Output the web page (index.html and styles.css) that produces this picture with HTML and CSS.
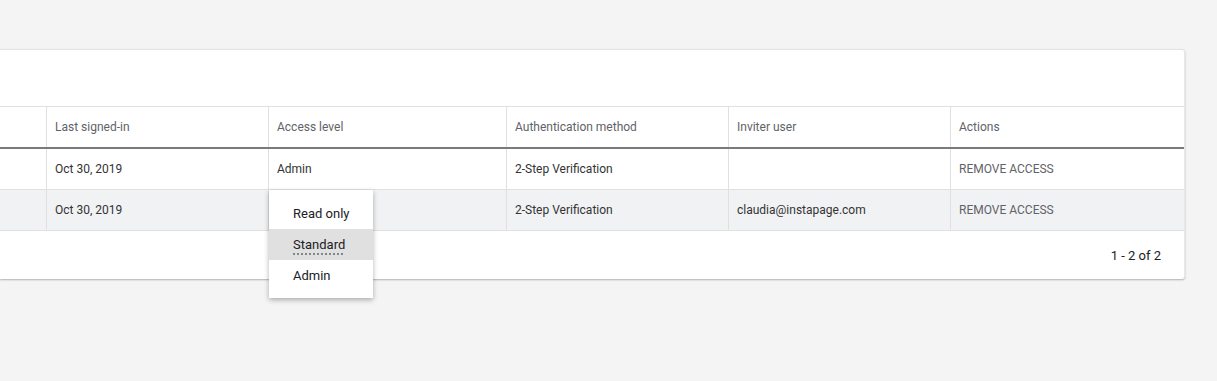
FILE: index.html
```html
<!DOCTYPE html>
<html lang="en">
<head>
  <meta charset="UTF-8" />
  <title>Users</title>
  <link rel="stylesheet" href="styles.css">
</head>
<body>
  <div class="page">
    <div class="card">
      <div class="card-head"></div>

      <!-- Table header -->
      <div class="row head-row">
        <div class="cell"></div>
        <div class="cell">Last signed-in</div>
        <div class="cell">Access level</div>
        <div class="cell">Authentication method</div>
        <div class="cell">Inviter user</div>
        <div class="cell">Actions</div>
      </div>

      <!-- Rows -->
      <div class="row">
        <div class="cell"></div>
        <div class="cell">Oct 30, 2019</div>
        <div class="cell">Admin</div>
        <div class="cell">2-Step Verification</div>
        <div class="cell"></div>
        <div class="cell action">REMOVE ACCESS</div>
      </div>
      <div class="row active">
        <div class="cell"></div>
        <div class="cell">Oct 30, 2019</div>
        <div class="cell menu-anchor">
          <ul class="menu">
            <li>Read only</li>
            <li class="selected"><span>Standard</span></li>
            <li>Admin</li>
          </ul>
        </div>
        <div class="cell">2-Step Verification</div>
        <div class="cell">claudia@instapage.com</div>
        <div class="cell action">REMOVE ACCESS</div>
      </div>

      <div class="card-foot">1 - 2 of 2</div>
    </div>
  </div>
</body>
</html>
```

FILE: styles.css
```css
/* Base */
html,
body {
  height: 100%;
}

body {
  margin: 0;
  font-family: Roboto, "Noto Sans", Arial, sans-serif;
  background-color: #f4f4f4;
  color: #202124;
}

.page {
  min-height: 100%;
  box-sizing: border-box;
  padding: 49px 32px 0 0;
}

.card {
  background-color: #ffffff;
  border-top: 1px solid #e3e3e3;
  border-right: 1px solid #e8e8e8;
  border-radius: 0 3px 3px 0;
  box-shadow: 0 1px 2px rgba(0, 0, 0, 0.28);
}

.card-head {
  height: 56px;
}

/* Table rows */
.row {
  display: grid;
  grid-template-columns: 46px 222px 238px 222px 222px 1fr;
  height: 40px;
  border-bottom: 1px solid #e0e0e0;
}

.head-row {
  border-top: 1px solid #e0e0e0;
  border-bottom: 2px solid #7a7a7a;
}

.cell {
  display: flex;
  align-items: center;
  padding-left: 8px;
  font-size: 12px;
  color: #333333;
  border-left: 1px solid #e0e0e0;
}

.cell:first-child {
  border-left: none;
}

.head-row .cell {
  color: #5f6368;
}

.row.active {
  background-color: #f1f2f4;
}

.cell.action {
  color: #5f6368;
}

/* Footer */
.card-foot {
  height: 48px;
  display: flex;
  align-items: center;
  justify-content: flex-end;
  padding-right: 23px;
  font-size: 13px;
  color: #202124;
}

/* Dropdown menu */
.menu-anchor {
  position: relative;
}

.menu {
  position: absolute;
  left: 0;
  top: 0;
  width: 104px;
  margin: 0;
  padding: 8px 0 7px;
  list-style: none;
  background-color: #ffffff;
  box-shadow: 0 2px 5px rgba(0, 0, 0, 0.3);
  z-index: 2;
}

.menu li {
  height: 31px;
  line-height: 31px;
  padding-left: 24px;
  font-size: 13px;
  color: #202124;
}

.menu li.selected {
  background-color: #e0e0e0;
}

.menu li.selected span {
  text-decoration: underline dotted #80868b;
  text-decoration-thickness: 2px;
  text-underline-offset: 4px;
}
```
